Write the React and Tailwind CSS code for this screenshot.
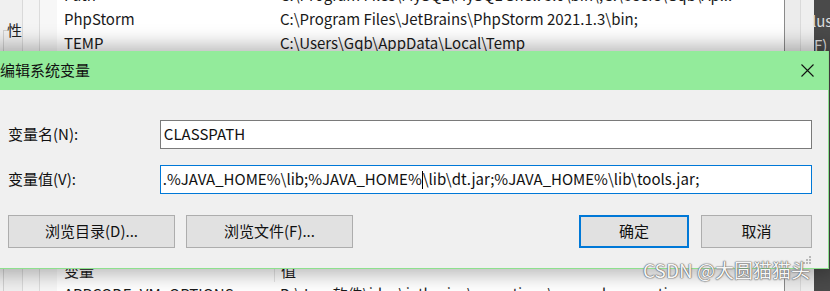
import React from "react";

const F = { fontFamily: "'Noto Sans CJK SC', sans-serif" };

function BgRow({ name, value, extra = "" }) {
  return (
    <div className={`flex h-[24px] shrink-0 items-center text-[15px] text-[#1a1a1a] ${extra}`}>
      <div className="w-[223px] pl-[7px] whitespace-nowrap">{name}</div>
      <div className="whitespace-nowrap">{value}</div>
    </div>
  );
}

function Btn({ children, primary, w }) {
  return (
    <div
      className={`flex h-[33px] items-center justify-center bg-[#e1e1e1] text-[15px] text-[#111] ${w} ${
        primary ? "border-2 border-[#0078d7]" : "border border-[#adadad]"
      }`}
    >
      {children}
    </div>
  );
}

export default function App() {
  return (
    <div
      className="relative h-[291px] w-[830px] overflow-hidden bg-[#f0f0f0]"
      style={F}
    >
      {/* background window */}
      <div className="flex h-full w-full">
        {/* left gutter */}
        <div className="relative flex h-full w-[57px] shrink-0">
          <div className="h-full w-[23px] border-r border-[#d9d9d9] bg-[#f0f0f0] pt-[19px] text-[15px] text-[#222]">
            <div className="flex items-start">
              <div className="mt-[11px] ml-[3px] h-[300px] w-[9px] border-l border-t border-[#d0d0d0]" />
              <span>性</span>
            </div>
          </div>
          <div className="h-full w-[17px] border-r border-[#dcdcdc] bg-[#f4f4f4]" />
          <div className="h-full w-[17px] bg-[#f7f7f7]" />
        </div>
        {/* list */}
        <div className="flex h-full w-[727px] shrink-0 flex-col bg-white">
          <div className="-mt-[17px]">
            <BgRow name="Path" value="C:\Program Files\MySQL\MySQL Shell 8.0\bin\;C:\Users\Gqb\Ap..." />
            <BgRow name="PhpStorm" value="C:\Program Files\JetBrains\PhpStorm 2021.1.3\bin;" />
            <BgRow name="TEMP" value="C:\Users\Gqb\AppData\Local\Temp" />
          </div>
          <div className="flex-1" />
          <div className="flex h-[22px] shrink-0 items-center text-[15px] text-[#1a1a1a]">
            <div className="flex h-full w-[218px] items-center border-r border-[#e5e5e5] pl-[7px]">变量</div>
            <div className="pl-[6px]">值</div>
          </div>
          <BgRow
            name="APPCODE_VM_OPTIONS"
            value="D:\Java软件\idea\jetbrains\vmoptions\appcode.vmoptions"
            extra="-mb-[15px]"
          />
        </div>
        {/* right scroll / other window */}
        <div className="h-full w-[16px] shrink-0 border-l border-[#8a8a8a] bg-[#ececec]" />
        <div className="h-full w-[14px] shrink-0 border-l border-[#dadada] bg-[#efefef]" />
        <div className="flex h-full flex-1 flex-col bg-[#4a4a4a] pt-[9px] text-[15px] leading-[24px] text-[#ddd]">
          <div className="-ml-[2px] whitespace-nowrap">lus</div>
          <div className="whitespace-nowrap">F)</div>
        </div>
      </div>

      {/* dialog */}
      <div className="absolute left-[-8px] top-[51px] flex h-[218px] w-[837px] flex-col border-b border-r border-[#8ee08e] bg-[#f0f0f0] shadow-[0_0_18px_6px_rgba(0,0,0,0.28)]">
        <div className="flex h-[39px] shrink-0 items-center justify-between bg-[#93eb9b] pl-[8px] pr-[14px]">
          <span className="text-[15px] text-[#111]">编辑系统变量</span>
          <svg width="13" height="13" viewBox="0 0 13 13">
            <path d="M0.5 0.5 L12.5 12.5 M12.5 0.5 L0.5 12.5" stroke="#111" strokeWidth="1.1" />
          </svg>
        </div>
        <div className="flex flex-1 flex-col pl-[16px] pr-[16px] pt-[30px]">
          <div className="flex h-[29px] items-center">
            <div className="w-[152px] text-[15px] text-[#111]">变量名(N):</div>
            <div className="flex h-[29px] w-[653px] items-center border border-[#7a7a7a] bg-white pl-[3px] text-[15px] text-[#111]">
              CLASSPATH
            </div>
          </div>
          <div className="mt-[16px] flex h-[29px] items-center">
            <div className="w-[152px] text-[15px] text-[#111]">变量值(V):</div>
            <div className="flex h-[29px] w-[653px] items-center whitespace-nowrap border border-[#0078d7] bg-white pl-[2px] text-[15px] text-[#111]">
              <span>.%JAVA_HOME%\lib;%JAVA_HOME%</span>
              <span className="h-[18px] w-px bg-black" />
              <span>\lib\dt.jar;%JAVA_HOME%\lib\tools.jar;</span>
            </div>
          </div>
          <div className="mt-[21px] flex items-center">
            <Btn w="w-[167px]">浏览目录(D)...</Btn>
            <div className="w-[11px]" />
            <Btn w="w-[167px]">浏览文件(F)...</Btn>
            <div className="flex-1" />
            <Btn primary w="w-[110px]">确定</Btn>
            <div className="w-[12px]" />
            <Btn w="w-[111px]">取消</Btn>
          </div>
          <div className="flex flex-1 items-end justify-end pb-[3px]">
            <svg width="9" height="9" viewBox="0 0 9 9">
              <rect x="6" y="0" width="2" height="2" fill="#b8b8b8" />
              <rect x="3" y="3" width="2" height="2" fill="#b8b8b8" />
              <rect x="6" y="3" width="2" height="2" fill="#b8b8b8" />
              <rect x="0" y="6" width="2" height="2" fill="#b8b8b8" />
              <rect x="3" y="6" width="2" height="2" fill="#b8b8b8" />
              <rect x="6" y="6" width="2" height="2" fill="#b8b8b8" />
            </svg>
          </div>
        </div>
      </div>

      {/* watermark */}
      <div className="absolute left-[643px] top-[258px] whitespace-nowrap text-[19px] leading-[24px] text-[#f6f6f6] [text-shadow:0_0_1px_#555,0_0_1px_#555,0_0_2px_#888]">
        CSDN @大圆猫猫头
      </div>
    </div>
  );
}
